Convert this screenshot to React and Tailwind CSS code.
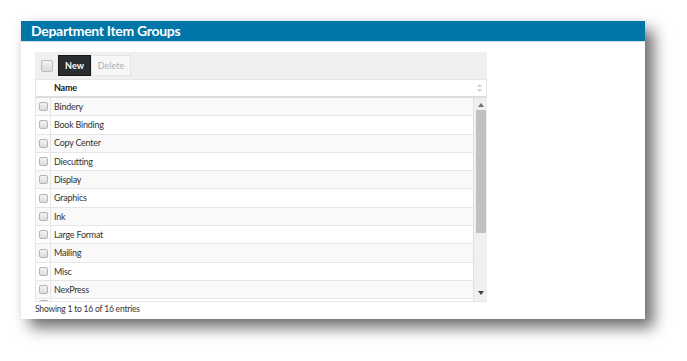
import React from 'react';

const rows = [
  'Bindery', 'Book Binding', 'Copy Center', 'Diecutting', 'Display', 'Graphics',
  'Ink', 'Large Format', 'Mailing', 'Misc', 'NexPress'
];

const Check = () => (
  <span className="block w-[9px] h-[9px] rounded-[2px] border border-[#b5b5b5] bg-gradient-to-b from-[#f4f4f4] to-[#dcdcdc]" />
);

export default function App() {
  return (
    <div className="w-[687px] h-[361px] bg-white pt-[21px] pl-[21px] font-['Lato','Open_Sans',sans-serif]">
      <div className="w-[624px] h-[298px] bg-white flex flex-col shadow-[9px_9px_14px_rgba(0,0,0,0.55),0_0_8px_rgba(0,0,0,0.08)]">
        {/* header */}
        <div className="h-[21px] bg-[#0075a8] border-b border-[#d5dde2] flex items-center pl-[10px]">
          <span className="text-white text-[14px] font-bold leading-none tracking-[-0.3px]">Department Item Groups</span>
        </div>

        <div className="pl-[14px] pt-[10px]">
          <div className="w-[452px]">
            {/* toolbar */}
            <div className="h-[27px] bg-[#f0f0f0] flex items-center pl-[6px] gap-[5px]">
              <span className="block w-[12px] h-[12px] rounded-[2px] border border-[#bdbdbd] bg-gradient-to-b from-[#f2f2f2] to-[#dadada]" />
              <button className="h-[21px] w-[33px] bg-[#2a2d2f] border border-[#151515] text-white text-[9px] font-bold">New</button>
              <button className="h-[21px] w-[40px] -ml-[5px] bg-[#f7f7f7] border border-[#e4e4e4] text-[#b0b0b0] text-[9px]">Delete</button>
            </div>

            {/* column header */}
            <div className="h-[19px] bg-white border border-[#e6e6e6] border-b-[2px] border-b-[#dedede] flex items-center">
              <span className="w-[18px]" />
              <span className="text-[9px] font-bold text-[#222] flex-1 tracking-[-0.2px]">Name</span>
              <svg width="5" height="8" viewBox="0 0 5 8" className="mr-[4px]">
                <path d="M2.5 0 L5 3 L0 3 Z M2.5 8 L5 5 L0 5 Z" fill="#cfcfcf" />
              </svg>
            </div>

            {/* body */}
            <div className="h-[204px] flex border-l border-b border-[#e6e6e6]">
              <div className="flex-1 overflow-hidden border-r border-[#e0e0e0]">
                {rows.map((r, i) => (
                  <div
                    key={r}
                    className={`h-[18.3px] flex items-center border-b border-[#e6e6e6] ${i % 2 === 0 ? 'bg-[#f9f9f9]' : 'bg-white'}`}
                  >
                    <span className="w-[15px] h-full flex items-center justify-center border-r border-[#e6e6e6]">
                      <Check />
                    </span>
                    <span className="pl-[3px] text-[9px] text-[#333] tracking-[-0.25px]">{r}</span>
                  </div>
                ))}
                <div className="h-[18px] flex items-start bg-white">
                  <span className="w-[15px] h-full flex justify-center border-r border-[#e6e6e6] pt-[1px]">
                    <span className="block w-[9px] h-[3px] rounded-t-[2px] border border-b-0 border-[#b5b5b5] bg-[#f4f4f4]" />
                  </span>
                </div>
              </div>
              {/* scrollbar */}
              <div className="w-[13px] bg-[#f0f0f0] flex flex-col items-center">
                <svg width="6" height="4" viewBox="0 0 6 4" className="mt-[5px]">
                  <path d="M3 0 L6 4 L0 4 Z" fill="#707070" />
                </svg>
                <span className="w-[10px] h-[123px] bg-[#c1c1c1] mt-[3px]" />
                <span className="flex-1" />
                <svg width="6" height="4" viewBox="0 0 6 4" className="mb-[6px]">
                  <path d="M0 0 L6 0 L3 4 Z" fill="#404040" />
                </svg>
              </div>
            </div>

            <div className="pt-[1px] text-[8.5px] text-[#333] tracking-[-0.2px]">Showing 1 to 16 of 16 entries</div>
          </div>
        </div>
      </div>
    </div>
  );
}
